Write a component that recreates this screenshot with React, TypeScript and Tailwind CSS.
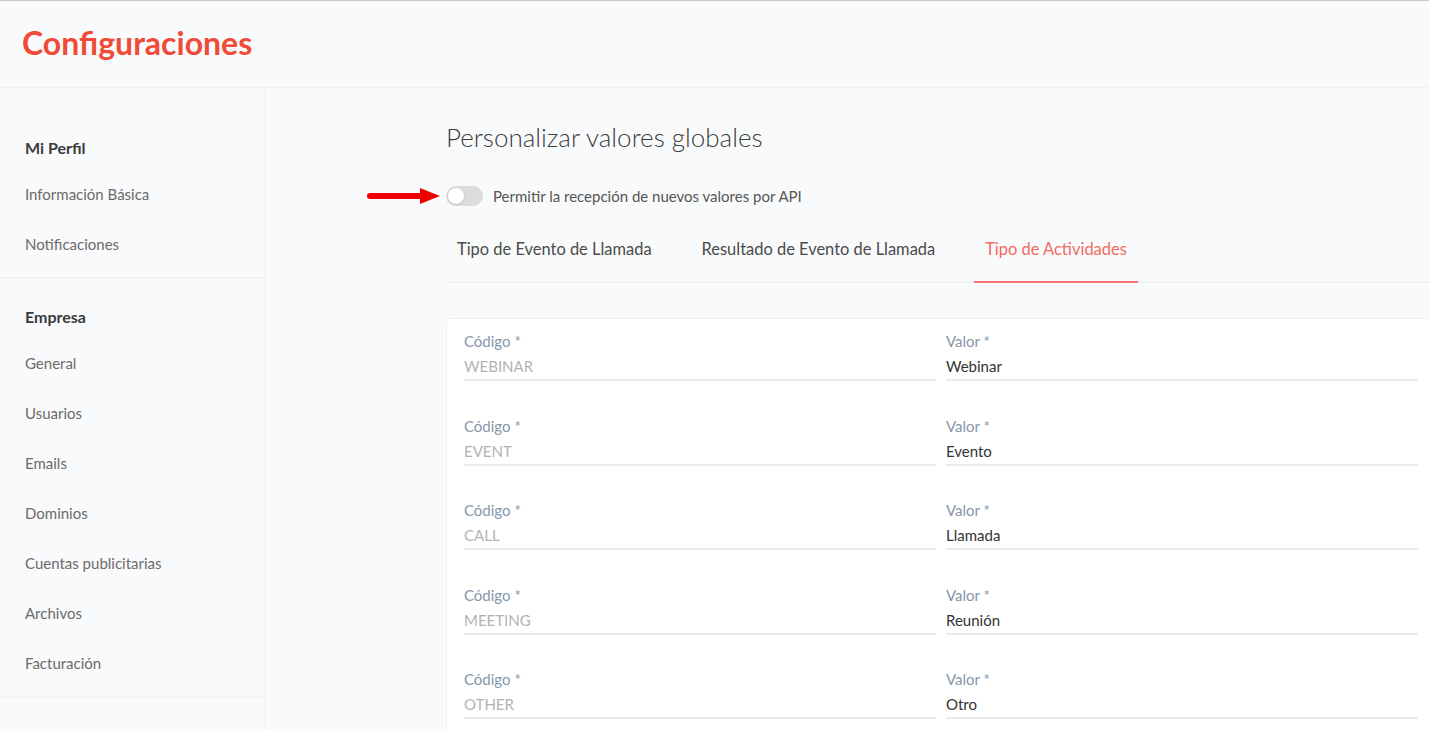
import React from 'react';

const SIDEBAR: { title: string; items: string[] }[] = [
  { title: 'Mi Perfil', items: ['Información Básica', 'Notificaciones'] },
  {
    title: 'Empresa',
    items: ['General', 'Usuarios', 'Emails', 'Dominios', 'Cuentas publicitarias', 'Archivos', 'Facturación'],
  },
  { title: 'CRM', items: [] },
];

const TABS = ['Tipo de Evento de Llamada', 'Resultado de Evento de Llamada', 'Tipo de Actividades'];

const ROWS: [string, string][] = [
  ['WEBINAR', 'Webinar'],
  ['EVENT', 'Evento'],
  ['CALL', 'Llamada'],
  ['MEETING', 'Reunión'],
  ['OTHER', 'Otro'],
];

const Field = ({ label, value, muted }: { label: string; value: string; muted?: boolean }) => (
  <div className="flex flex-col">
    <span className="text-[15px] leading-[20px] text-[#8696aa]">{label}</span>
    <span
      className={`mt-[5px] text-[15px] leading-[20px] pb-[3px] border-b-2 border-[#e6edf2] ${
        muted ? 'text-[#b3b3b3]' : 'text-[#333333]'
      }`}
    >
      {value}
    </span>
  </div>
);

export default function App() {
  return (
    <div
      className="w-[1429px] h-[731px] overflow-hidden bg-[#f9fafc] border-t border-[#c9c9c9] flex flex-col"
      style={{ fontFamily: 'Lato, "Open Sans", sans-serif' }}
    >
      {/* Header */}
      <div className="h-[87px] shrink-0 flex items-center pl-[22px] border-b border-[#f0f1f3]">
        <h1 className="text-[32px] font-bold text-[#f04b36] -mt-[2px]">Configuraciones</h1>
      </div>

      <div className="flex flex-1 min-h-0">
        {/* Sidebar */}
        <aside className="w-[266px] shrink-0 border-r border-[#eceef2] pt-[39px]">
          {SIDEBAR.map((group, gi) => (
            <div key={group.title} className={gi > 0 ? 'border-t-2 border-[#f1f2f5] mr-[3px] pt-[17px]' : 'mr-[3px]'}>
              <div className="pl-[25px] h-[42px] flex items-center text-[16px] font-bold text-[#3a3a3a]">
                {group.title}
              </div>
              {group.items.map((item) => (
                <div key={item} className="pl-[25px] h-[50px] flex items-center text-[15px] text-[#6b6b6b]">
                  {item}
                </div>
              ))}
              {group.items.length > 0 && <div className="h-[8px]" />}
            </div>
          ))}
        </aside>

        {/* Main */}
        <main className="flex-1 min-w-0 pl-[180px] pt-[33px]">
          <h2 className="text-[26px] font-light text-[#3d3d3d] leading-[32px]">Personalizar valores globales</h2>

          <div className="relative mt-[33px] flex items-center gap-[10px]">
            {/* red arrow */}
            <svg className="absolute left-[-80px] top-[1px]" width="76" height="18" viewBox="0 0 76 18">
              <line x1="4" y1="9" x2="56" y2="9" stroke="#ee0000" strokeWidth="6" strokeLinecap="round" />
              <polygon points="54,1 74,9 54,17" fill="#ee0000" />
            </svg>
            <div className="w-[37px] h-[20px] rounded-full bg-[#dcdcdc] relative">
              <div className="absolute left-[2px] top-[2px] w-[16px] h-[16px] rounded-full bg-white shadow-sm" />
            </div>
            <span className="text-[15px] leading-[20px] text-[#555555]">
              Permitir la recepción de nuevos valores por API
            </span>
          </div>

          {/* Tabs */}
          <div className="mt-[17px] flex gap-[28px] border-b-2 border-[#f0f1f4]">
            {TABS.map((tab, i) => (
              <div
                key={tab}
                className={`px-[11px] pt-[15px] pb-[21px] text-[16.45px] leading-[22px] -mb-[2px] border-b-2 ${
                  i === 2 ? 'text-[#f26b5f] border-[#f2786c]' : 'text-[#4a4a4a] border-transparent'
                }`}
              >
                {tab}
              </div>
            ))}
          </div>

          {/* Card */}
          <div className="mt-[35px] w-[1000px] bg-white border border-[#eef0f3] rounded-[4px] pl-[17px] pt-[12px]">
            {ROWS.map(([code, value]) => (
              <div key={code} className="grid grid-cols-[472px_472px] gap-x-[10px] h-[84.5px]">
                <Field label="Código *" value={code} muted />
                <Field label="Valor *" value={value} />
              </div>
            ))}
          </div>
        </main>
      </div>
    </div>
  );
}
